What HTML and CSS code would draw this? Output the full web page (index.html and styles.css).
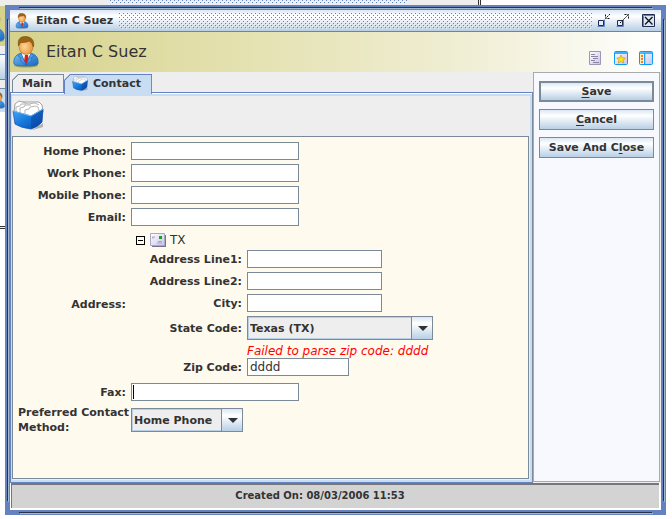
FILE: index.html
```html
<!DOCTYPE html>
<html lang="en">
<head>
<meta charset="utf-8">
<title>Eitan C Suez</title>
<link rel="stylesheet" href="styles.css">
</head>
<body>
<svg class="defs" aria-hidden="true">
  <defs>
    <linearGradient id="suit" x1="0" y1="0" x2="1" y2="1"><stop offset="0" stop-color="#79bdf5"/><stop offset="1" stop-color="#1565c0"/></linearGradient>
    <radialGradient id="face" cx=".4" cy=".5" r=".6"><stop offset="0" stop-color="#ffd596"/><stop offset="1" stop-color="#e9953c"/></radialGradient>
    <linearGradient id="box" x1="0" y1="0" x2="1" y2="1"><stop offset="0" stop-color="#4aa8f8"/><stop offset=".5" stop-color="#1478dc"/><stop offset="1" stop-color="#0747a6"/></linearGradient>
    <linearGradient id="lilac" x1="0" y1="0" x2="1" y2="1"><stop offset="0" stop-color="#fff"/><stop offset="1" stop-color="#c9c4ee"/></linearGradient>
    <pattern id="dots" width="4" height="4" patternUnits="userSpaceOnUse">
      <path fill="#6382bf" d="M0 0h1v1H0zM2 2h1v1H2z"/><path fill="#fff" fill-opacity=".6" d="M1 1h1v1H1zM3 3h1v1H3z"/>
    </pattern>
    <symbol id="person" viewBox="0 0 26 32">
      <ellipse cx="13" cy="29.500" rx="12" ry="2" fill="#000" opacity=".25"/>
      <path d="M1 28C0 21 4 18 9 17h8c5 1 9 4 8 11q-2 2-12 2T1 28z" fill="url(#suit)" stroke="#1e6fc0" stroke-width=".8"/>
      <path d="M8 17l5 11 5-11-5 1z" fill="#fff"/>
      <path d="M12 19h3l1 6-2.500 4-2.500-4z" fill="#d81e1e"/>
      <path d="M8 17l-3 3 3 2-1 2 6 5zM18 17l3 3-3 2 1 2-6 5z" fill="#4b9ee8" stroke="#1762b0" stroke-width=".6"/>
      <ellipse cx="13" cy="10.500" rx="7" ry="8" fill="url(#face)" stroke="#b3681c" stroke-width=".6"/>
      <path d="M5.500 10C4 3 8 0 13 .500S22 4 20.500 11C19 8 19 6 16 5c-3 2-7 1-9 2z" fill="#9a6412" stroke="#6f430a" stroke-width=".5"/>
    </symbol>
    <symbol id="files" viewBox="0 0 32 30">
      <path d="M3 26l17 4 11-7v4l-10 3z" fill="#000" opacity=".25"/>
      <path d="M2 13L3 4l4-3 4 1 16 0 3 3 1 7-12 6z" fill="#fff" stroke="#8c8c8c" stroke-width=".8"/>
      <path d="M4 12V7l4-1 1-2 5 0M8 13V8l4-1 1-2 6 0M13 14v-4l4-1 1-2 6-1 2 1 1 4M11 2l5 2 7-1 4 2" fill="none" stroke="#9a9a9a" stroke-width=".7"/>
      <path d="M1 11l18 5 12-7-1 13q-4 5-11 7Q9 28 3 24z" fill="url(#box)" stroke="#0b4fa8" stroke-width=".7"/>
      <path d="M19 16v13q7-2 11-7l1-13z" fill="#0a3f98" opacity=".45"/>
      <path d="M1 11l18 5 12-7" fill="none" stroke="#6fbcfa" stroke-width="1"/>
    </symbol>
  </defs>
</svg>

<div class="behind behind-top"><svg class="behind-dots"><rect width="100%" height="100%" fill="url(#dots)"/></svg></div>
<div class="behind behind-left">
  <div class="peek-header"><svg><use href="#person"/></svg></div>
  <div class="peek-tab"></div>
  <div class="peek-row"><svg><use href="#person"/></svg></div>
  <div class="peek-body"></div>
</div>

<main class="window">
  <div class="client">
    <header class="titlebar">
      <svg class="title-icon"><use href="#person"/></svg>
      <span class="title-text">Eitan C Suez</span>
      <svg class="title-dots"><rect width="100%" height="100%" fill="url(#dots)"/></svg>
      <button class="frame-button" aria-label="Minimize"><svg viewBox="0 0 16 16"><path d="M2.500 7.500h5v5h-5z" fill="#e4eefa" stroke="#222b4e" stroke-width="1"/><path d="M1.500 13.500h7v-7" fill="none" stroke="#6382bf"/><path d="M14 1l-4 4M9.500 1.500v4h4" fill="none" stroke="#111" stroke-dasharray="2 1"/></svg></button>
      <button class="frame-button" aria-label="Maximize"><svg viewBox="0 0 16 16"><path d="M2.500 7.500h5v5h-5z" fill="#e4eefa" stroke="#222b4e"/><path d="M1.500 13.500h7v-7" fill="none" stroke="#6382bf"/><path d="M5 10l8-8M9.500 1.500h4v4" fill="none" stroke="#111" stroke-dasharray="2 1"/></svg></button>
      <button class="frame-button close" aria-label="Close"><svg viewBox="0 0 16 16"><path d="M1.500 1.500h12v12h-12z" fill="#dce8f6" stroke="#222b4e"/><path d="M2.500 13V2.500H13" fill="none" stroke="#6382bf"/><path d="M4 4l7.500 7.500M11.500 4L4 11.500" stroke="#111" stroke-width="1.300"/></svg></button>
    </header>

    <section class="banner">
      <svg class="banner-icon"><use href="#person"/></svg>
      <h1>Eitan C Suez</h1>
      <div class="views">
        <button aria-label="Details"><svg viewBox="0 0 14 14"><path d="M.5.500h11v13H.5z" fill="url(#lilac)" stroke="#9c98b8"/><path d="M2 3.500h4M2 5.500h7M4 7.500h5M2 9.500h4M4 11.500h6" stroke="#8a86a2"/></svg></button>
        <button aria-label="Favorites"><svg viewBox="0 0 14 14"><rect x=".5" y=".5" width="13" height="13" rx="1" fill="url(#lilac)" stroke="#0a9bf5"/><path d="M1 2h12" stroke="#36b0ff" stroke-width="2"/><path d="M7 4l1.300 2.800 3 .300-2.200 2 .700 3L7 10.600 4.200 12.100l.700-3-2.200-2 3-.300z" fill="#ffe21f" stroke="#c99a16" stroke-width=".7"/></svg></button>
        <button aria-label="Side panel"><svg viewBox="0 0 14 14"><rect x=".5" y=".5" width="13" height="13" rx="1" fill="url(#lilac)" stroke="#0a9bf5"/><path d="M1 2h12M5.500 2v11" stroke="#1ba4fa" stroke-width="1.500"/><path d="M1 3h4v10H1z" fill="#fff0b0"/><path d="M2 5h2M2 8h2M2 11h2" stroke="#f0501c" stroke-width="1.600"/></svg></button>
      </div>
    </section>

    <div class="workspace">
      <div class="tabs">
        <div class="tablist" role="tablist">
          <button class="tab" role="tab" aria-selected="false">Main</button>
          <button class="tab selected" role="tab" aria-selected="true"><svg><use href="#files"/></svg>Contact</button>
        </div>
        <div class="tabpanel" role="tabpanel">
          <div class="panel-icon"><svg><use href="#files"/></svg></div>
          <form class="form" id="contact">
            <label for="home">Home Phone:</label><input class="text" id="home">
            <label for="work">Work Phone:</label><input class="text" id="work">
            <label for="mobile">Mobile Phone:</label><input class="text" id="mobile">
            <label for="email">Email:</label><input class="text" id="email">
            <span class="label" id="address-label">Address:</span>
            <div class="address" role="group" aria-labelledby="address-label">
              <div class="summary">
                <button type="button" class="toggle" aria-label="Collapse address"></button>
                <svg class="mail" viewBox="0 0 16 14"><path d="M2 2h14v12H2z" fill="#77758c"/><path d="M.5.500h14v12H.5z" fill="url(#lilac)" stroke="#aaa7c4"/><path d="M9 3h3v3H9z" fill="#19a519"/><path d="M2 4h3M2 5h2M8 8.500h4M7 10h5" stroke="#a9a9b4"/></svg>
                <span>TX</span>
              </div>
              <div class="address-grid">
                <label for="line1">Address Line1:</label><input class="text medium" id="line1">
                <label for="line2">Address Line2:</label><input class="text medium" id="line2">
                <label for="city">City:</label><input class="text medium" id="city">
                <label for="state">State Code:</label>
                <div class="combo wide"><select id="state"><option>Texas (TX)</option></select></div>
                <p class="error" id="zip-error">Failed to parse zip code: dddd</p>
                <label for="zip">Zip Code:</label><input class="text short" id="zip" value="dddd" aria-describedby="zip-error">
              </div>
            </div>
            <label for="fax">Fax:</label><div class="focused"><input class="text" id="fax"></div>
            <label class="multiline" for="method">Preferred Contact<br>Method:</label>
            <div class="combo"><select id="method"><option>Home Phone</option></select></div>
          </form>
        </div>
      </div>
      <aside class="actions">
        <button class="action default"><span><u>S</u>ave</span></button>
        <button class="action"><span><u>C</u>ancel</span></button>
        <button class="action"><span>Save And C<u>l</u>ose</span></button>
      </aside>
    </div>
    <footer class="status">Created On: 08/03/2006 11:53</footer>
  </div>
</main>
</body>
</html>
```
FILE: styles.css
```css
* { box-sizing: border-box; }

body {
  margin: 0;
  min-height: 100vh;
  padding: 5px 6px 4px 5px;
  display: flex;
  position: relative;
  background: #fff;
  color: #333;
  font: bold 11px/15px "DejaVu Sans", "Noto Sans", sans-serif;
}

button, input, select { font: inherit; color: inherit; margin: 0; padding: 0; border: 0; background: none; border-radius: 0; }
button svg { display: block; }
.defs { position: absolute; width: 0; height: 0; }

/* Parts of the window that lies underneath */
.behind { position: absolute; left: 0; top: 0; overflow: hidden; }
.behind-top { width: 481px; height: 5px; background: #eee; border-right: 3px double #333; }
.behind-dots { position: absolute; left: 110px; top: 0; width: 298px; height: 3px; }
.behind-left { width: 5px; height: 229px; border-bottom: 3px double #333; background: #eee; }
.peek-header { margin-top: 6px; height: 40px; background: #d6d28c; }
.peek-header svg { width: 26px; height: 32px; margin: 5px 0 0 -21px; }
.peek-tab { margin-top: 8px; height: 26px; border: solid #6382bf; border-width: 1px 0; background: linear-gradient(#fff, #b8cfe5); }
.peek-row { margin-top: 8px; height: 24px; border-top: 1px solid #7a8a99; background: #c8ddf2; }
.peek-row svg { width: 14px; height: 17px; margin: 3px 0 0 -9px; }
.peek-body { height: 120px; background: #fff; }

/* Frame with engraved lines that stop short of the corners */
.window {
  --dark: linear-gradient(#2b3247, #2b3247);
  --light: linear-gradient(#a3b8cc, #a3b8cc);
  position: relative;
  flex: 1;
  display: flex;
  padding: 5px;
  background:
    var(--dark) 14px 2px / calc(100% - 28px) 1px no-repeat,
    var(--light) 15px 3px / calc(100% - 28px) 1px no-repeat,
    var(--dark) 2px 14px / 1px calc(100% - 28px) no-repeat,
    var(--light) 3px 15px / 1px calc(100% - 28px) no-repeat,
    var(--dark) 14px calc(100% - 2px) / calc(100% - 28px) 1px no-repeat,
    var(--light) 15px calc(100% - 1px) / calc(100% - 28px) 1px no-repeat,
    var(--dark) calc(100% - 2px) 14px / 1px calc(100% - 28px) no-repeat,
    var(--light) calc(100% - 1px) 15px / 1px calc(100% - 28px) no-repeat,
    #6382bf;
}
.client { flex: 1; min-width: 0; display: flex; flex-direction: column; }

.titlebar {
  height: 22px;
  display: flex;
  align-items: center;
  padding: 0 4px 0 5px;
  border-bottom: 1px solid #6382bf;
  background: linear-gradient(#dce7f5, #fff 30%, #b8cfe5);
}
.title-icon { width: 14px; height: 16px; }
.title-text { margin: 0 6px 0 7px; }
.title-dots { flex: 1; width: 0; height: 16px; margin-right: 4px; }
.frame-button { width: 16px; height: 16px; margin-right: 3px; }
.frame-button svg { width: 16px; height: 16px; }
.frame-button.close { margin: 0 0 0 7px; }

.banner {
  height: 40px;
  display: flex;
  align-items: center;
  padding: 0 8px 0 3px;
  background: linear-gradient(90deg, #d6d28c, #e4e1b0 35%, #f0eed4 70%, #fff);
}
.banner-icon { width: 26px; height: 32px; }
h1 { margin: 0 0 0 7px; font-size: 16px; line-height: 24px; font-weight: normal; }
.views { margin: 12px 0 0 auto; display: flex; gap: 11px; }
.views svg { width: 14px; height: 14px; }

.workspace { flex: 1; display: flex; background: #eee; }
.tabs { flex: 1; display: flex; flex-direction: column; padding-top: 2px; }
.tablist { display: flex; align-items: flex-start; margin-left: 2px; }
.tab {
  height: 18px;
  padding: 0 11px 0 9px;
  border: solid #7a8a99;
  border-width: 1px 1px 0 1px;
  background: linear-gradient(135deg, #7a8a99 5px, #eee 5px) border-box;
  clip-path: polygon(6px 0, 100% 0, 100% 100%, 0 100%, 0 6px);
}
.tab.selected {
  display: flex;
  align-items: center;
  gap: 5px;
  height: 20px;
  margin-bottom: -2px;
  padding: 0 10px 2px 7px;
  position: relative;
  border-color: #6382bf;
  background: linear-gradient(135deg, #6382bf 5px, #c8ddf2 5px) border-box;
}
.tab svg { width: 16px; height: 15px; }
.tabpanel {
  flex: 1;
  display: flex;
  flex-direction: column;
  border: 1px solid #6382bf;
  border-right-color: #7a8a99;
  box-shadow: inset 0 1px #fff, inset 0 3px #c8ddf2, inset 1px 0 #c8ddf2, inset -2px -2px #c8ddf2;
  padding: 4px 3px 3px 1px;
}
.panel-icon { height: 39px; padding: 3px 0 0; }
.panel-icon svg { width: 32px; height: 30px; display: block; }

.form {
  flex: 1;
  display: grid;
  grid-template-columns: 108px 1fr;
  gap: 4px 5px;
  align-content: start;
  align-items: center;
  justify-items: start;
  padding: 5px;
  border: 1px solid #7a8a99;
  background: #fffaee;
}
.form label, .form .label { justify-self: end; white-space: nowrap; }
.form label.multiline { justify-self: start; }
.text {
  display: block;
  width: 168px;
  height: 18px;
  padding: 0 2px;
  border: 1px solid #7a8a99;
  background: #fff;
  font-size: 12px;
  font-weight: normal;
  outline: 0;
}
.text.medium { width: 135px; }
.text.short { width: 102px; }

.address { padding: 2px 0 3px 4px; }
.summary { display: flex; align-items: center; height: 16px; margin-bottom: 2px; font-size: 12px; font-weight: normal; }
.toggle { width: 9px; height: 9px; border: 1px solid #000; background: linear-gradient(#000, #000) center / 5px 1px no-repeat; margin: 0 5px 0 1px; }
.mail { width: 16px; height: 14px; margin-right: 4px; }
.address-grid {
  display: grid;
  grid-template-columns: 107px auto;
  gap: 4px 5px;
  align-items: center;
  justify-items: start;
}
.error { grid-column: 2; margin: 0 0 -4px; font-size: 12px; line-height: 14px; color: #f00; font-weight: normal; font-style: italic; }

.combo { position: relative; width: 112px; height: 24px; }
.combo.wide { width: 186px; }
.combo select {
  appearance: none;
  width: 100%;
  height: 24px;
  padding: 0 21px 0 2px;
  border: 1px solid #7a8a99;
  background: #eee;
  box-shadow: inset 0 0 0 1px #b8cfe5;
}
.combo::before {
  content: "";
  position: absolute;
  inset: 0 0 0 auto;
  width: 20px;
  border: 1px solid #7a8a99;
  background: linear-gradient(#dce7f5, #fff 30%, #b8cfe5);
  pointer-events: none;
}
.combo::after {
  content: "";
  position: absolute;
  right: 5px;
  top: 10px;
  border: solid transparent;
  border-width: 5px 5px 0;
  border-top-color: #333;
  pointer-events: none;
}
.focused { position: relative; }
.focused::after { content: ""; position: absolute; left: 2px; top: 2px; width: 1px; height: 14px; background: #000; }

.actions {
  width: 127px;
  display: flex;
  flex-direction: column;
  gap: 7px;
  padding: 8px 5px;
  margin: 0 1px 1px 0;
  border: 1px solid #aaa;
  background: #f8f8ff;
}
.action { height: 21px; border: 1px solid #7a8a99; background: linear-gradient(#dce7f5, #fff 30%, #b8cfe5); }
.action.default { border-width: 2px; }
.action u { text-underline-offset: 2px; }

.status {
  height: 27px;
  padding-right: 30px;
  display: flex;
  align-items: center;
  justify-content: center;
  border: solid #fff;
  border-width: 0 2px 2px 1px;
  box-shadow: inset 1px 2px #777;
  background: #d3d3d3;
  font-size: 10px;
}
```
